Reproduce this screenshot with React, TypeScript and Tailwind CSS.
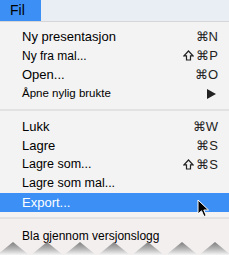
import React from "react";

type Item = {
  label: string;
  size: string;
  shortcut?: string;
  shift?: boolean;
  arrow?: boolean;
  active?: boolean;
};

const groupA: Item[] = [
  { label: "Ny presentasjon", size: "text-[13px]", shortcut: "N" },
  { label: "Ny fra mal...", size: "text-[12px]", shortcut: "P", shift: true },
  { label: "Open...", size: "text-[13px]", shortcut: "O" },
  { label: "Åpne nylig brukte", size: "text-[11.5px]", arrow: true },
];

const groupB: Item[] = [
  { label: "Lukk", size: "text-[13px]", shortcut: "W" },
  { label: "Lagre", size: "text-[13px]", shortcut: "S" },
  { label: "Lagre som...", size: "text-[12.5px]", shortcut: "S", shift: true },
  { label: "Lagre som mal...", size: "text-[12.5px]" },
  { label: "Export...", size: "text-[13px]", active: true },
];

function ShiftIcon() {
  return (
    <svg width="11" height="11" viewBox="0 0 11 11" className="mr-[2px]">
      <path
        d="M5.5 1 L10 5.8 L7.5 5.8 L7.5 10 L3.5 10 L3.5 5.8 L1 5.8 Z"
        fill="none"
        stroke="#222"
        strokeWidth="1.2"
        strokeLinejoin="miter"
      />
    </svg>
  );
}

function Row({ item }: { item: Item }) {
  return (
    <div
      className={`flex h-[19px] items-center justify-between pl-[22px] pr-[11px] ${
        item.active ? "bg-[#3c90f5] text-white" : "text-black"
      }`}
    >
      <span className={item.size}>{item.label}</span>
      {item.shortcut && (
        <span className="flex items-center text-[13px] text-[#222]">
          {item.shift && <ShiftIcon />}
          <span>⌘{item.shortcut}</span>
        </span>
      )}
      {item.arrow && (
        <svg width="9" height="10" viewBox="0 0 9 10" className="mr-[2px]">
          <path d="M0 0 L9 5 L0 10 Z" fill="#222" />
        </svg>
      )}
    </div>
  );
}

function Cursor() {
  return (
    <svg
      width="13"
      height="19"
      viewBox="0 0 13 19"
      className="absolute left-[197px] top-[199px]"
    >
      <path
        d="M1 1 L1 15 L4.5 11.8 L7 17.5 L9.2 16.5 L6.8 11 L11.5 11 Z"
        fill="#000"
        stroke="#fff"
        strokeWidth="1"
        strokeLinejoin="round"
      />
    </svg>
  );
}

function TornEdge() {
  const peaks = [13, 47, 80, 114, 148, 182, 215];
  return (
    <svg width="229" height="13" viewBox="0 0 229 13" className="block">
      <defs>
        <linearGradient id="g" x1="0" y1="0" x2="0" y2="1">
          <stop offset="0" stopColor="#7c7c7c" />
          <stop offset="0.55" stopColor="#b9b9b9" />
          <stop offset="1" stopColor="#f6f6f6" />
        </linearGradient>
      </defs>
      {peaks.map((p) => (
        <path
          key={p}
          d={`M${p - 16} 13 L${p} 0 L${p + 16} 13 Z`}
          fill="url(#g)"
        />
      ))}
    </svg>
  );
}

export default function App() {
  return (
    <div
      className="relative flex h-[255px] w-[229px] flex-col overflow-hidden bg-[#f3f3f3]"
      style={{ fontFamily: "'Liberation Sans', Arial, sans-serif" }}
    >
      <div className="flex h-[22px] shrink-0 border-b border-[#d6d6d6] bg-[#e9eef4]">
        <div className="flex w-[41px] items-center bg-[#3c90f5] pl-[10px] text-[14px] text-black">
          Fil
        </div>
      </div>
      <div className="pt-[5px]">
        {groupA.map((i) => (
          <Row key={i.label} item={i} />
        ))}
        <div className="my-[6px] h-[2px] bg-[#e2e2e2]" />
        {groupB.map((i) => (
          <Row key={i.label} item={i} />
        ))}
        <div className="mt-[5px] h-[2px] bg-[#e2e2e2]" />
      </div>
      <div className="flex-1 bg-[#f4efef] pl-[22px] pt-[8px] text-[12px] text-black">
        Bla gjennom versjonslogg
      </div>
      <div className="absolute bottom-0 left-0">
        <TornEdge />
      </div>
      <Cursor />
    </div>
  );
}
